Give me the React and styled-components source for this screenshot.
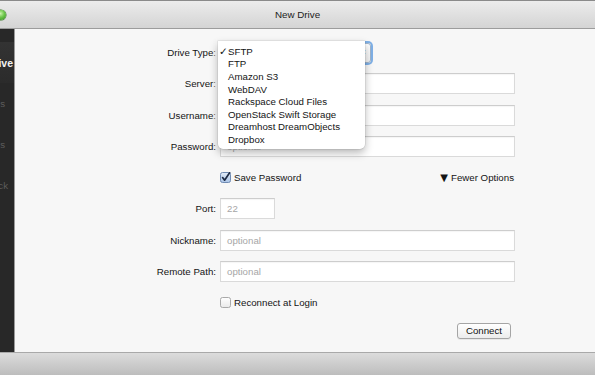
import React from 'react';
import styled, { createGlobalStyle } from 'styled-components';

const GlobalStyle = createGlobalStyle`
  html, body {
    margin: 0;
    padding: 0;
    background: #f6f6f6;
  }
  body {
    font-family: 'Liberation Sans', Arial, sans-serif;
  }
`;

const Window = styled.div`
  width: 595px;
  height: 375px;
  display: flex;
  flex-direction: column;
  overflow: hidden;
  font-size: 9.7px;
  color: #141414;
`;

const TitleBar = styled.div`
  height: 27px;
  flex: none;
  display: grid;
  grid-template-columns: 1fr auto 1fr;
  align-items: center;
  border-top: 1px solid #8a8a8a;
  border-bottom: 1px solid #9c9c9c;
  background: linear-gradient(#ececec, #d4d4d4);
`;

const Light = styled.span`
  width: 10px;
  height: 10px;
  margin-left: -4px;
  border-radius: 50%;
  background: radial-gradient(circle at 45% 35%, #c6f2a8 0, #6cc64a 45%, #2f8a1f 100%);
  box-shadow: 0 0 0 0.5px #3a7a2a;
`;

const Title = styled.div`
  font-size: 9.8px;
  color: #222;
`;

const Body = styled.div`
  flex: 1;
  display: flex;
  min-height: 0;
`;

const Sidebar = styled.div`
  width: 14px;
  flex: none;
  background: #282828;
  border-right: 1px solid #9a9a9a;
  display: flex;
  flex-direction: column;
  overflow: hidden;
`;

const SideItem = styled.div`
  height: 41px;
  display: flex;
  align-items: center;
  justify-content: flex-end;
  white-space: nowrap;
  padding-right: ${(p) => p.$pad}px;
  font-size: ${(p) => (p.$active ? 10.5 : 9.7)}px;
  font-weight: ${(p) => (p.$active ? 700 : 400)};
  color: ${(p) => (p.$active ? '#f2f2f2' : '#5c5c5c')};
  background: ${(p) => (p.$active ? 'linear-gradient(#333, #2b2b2b)' : 'transparent')};
  margin-top: ${(p) => p.$top || 0}px;
`;

const Main = styled.div`
  flex: 1;
  background: #f7f7f7;
  padding-top: 13px;
`;

const Form = styled.div`
  display: grid;
  grid-template-columns: 201px 295px;
  grid-auto-rows: 21px;
  column-gap: 4px;
  row-gap: 10.3px;
`;

const Label = styled.div`
  display: flex;
  align-items: center;
  justify-content: flex-end;
  white-space: nowrap;
`;

const Field = styled.div`
  position: relative;
  display: flex;
  align-items: center;
  justify-content: ${(p) => p.$justify || 'flex-start'};
  padding-right: ${(p) => p.$padRight || 0}px;
`;

const Input = styled.div`
  box-sizing: border-box;
  width: ${(p) => p.$width || 295}px;
  height: 21px;
  background: #fff;
  border: 1px solid #dadada;
  border-top-color: #cdcdcd;
  box-shadow: inset 0 1px 1px rgba(0, 0, 0, 0.04);
  display: flex;
  align-items: center;
  padding-left: 6px;
  color: #a6a6a6;
`;

const Select = styled.div`
  box-sizing: border-box;
  width: 151px;
  height: 20px;
  border-radius: 3px;
  border: 1px solid #9fb4cc;
  background: linear-gradient(#ffffff, #f1f1f1);
  box-shadow: 0 0 0 2px #7fb0e6;
  display: flex;
  align-items: center;
  justify-content: flex-end;
  padding-right: 3px;
`;

const Arrows = styled.span`
  font-size: 8px;
  line-height: 1;
  color: #444;
`;

const Menu = styled.div`
  position: absolute;
  left: -2px;
  top: -1px;
  width: 147px;
  box-sizing: border-box;
  padding: 4px 0 3px 2px;
  background: #fff;
  border-radius: 0 0 5px 5px;
  box-shadow: 0 4px 9px rgba(0, 0, 0, 0.28), 0 0 0 0.5px rgba(0, 0, 0, 0.12),
    -3px 0 3px rgba(247, 247, 247, 0.95);
  z-index: 2;
`;

const MenuItem = styled.div`
  display: flex;
  align-items: center;
  height: 12.6px;
  white-space: nowrap;
`;

const Check = styled.span`
  width: 8px;
  flex: none;
  font-size: 10.5px;
  font-family: 'DejaVu Sans', sans-serif;
  margin-left: -1px;
  margin-right: 1px;
`;

const CheckRow = styled.label`
  display: flex;
  align-items: center;
  gap: 3px;
`;

const Disclosure = styled.span`
  display: flex;
  align-items: center;
  gap: 3px;
`;

const Triangle = styled.span`
  font-size: 10px;
  font-family: 'DejaVu Sans', sans-serif;
  line-height: 1;
`;

const Button = styled.div`
  box-sizing: border-box;
  width: 54px;
  height: 16px;
  align-self: flex-start;
  margin-top: -1px;
  border: 1px solid #a5a5a5;
  border-radius: 3px;
  background: linear-gradient(#ffffff, #ececec);
  box-shadow: 0 1px 0 rgba(0, 0, 0, 0.06);
  display: flex;
  align-items: center;
  justify-content: center;
  color: #111;
`;

const BottomBar = styled.div`
  height: 22px;
  flex: none;
  border-top: 1px solid #a9a9a9;
  background: linear-gradient(#dcdcdc, #bdbdbd);
`;

const CheckBox = ({ checked }) => (
  <svg width="11" height="11" viewBox="0 0 11 11">
    <defs>
      <linearGradient id={checked ? 'cbOn' : 'cbOff'} x1="0" y1="0" x2="0" y2="1">
        <stop offset="0" stopColor={checked ? '#e2ecf8' : '#ffffff'} />
        <stop offset="1" stopColor={checked ? '#a9c3e6' : '#e9e9e9'} />
      </linearGradient>
    </defs>
    <rect
      x="0.5"
      y="0.5"
      width="10"
      height="10"
      rx="2"
      fill={`url(#${checked ? 'cbOn' : 'cbOff'})`}
      stroke={checked ? '#6f8bb3' : '#a9a9a9'}
    />
    {checked && (
      <path d="M2.6 5.6 L4.6 8.2 L9.6 0.8" fill="none" stroke="#1c2a44" strokeWidth="1.7" strokeLinecap="round" strokeLinejoin="round" />
    )}
  </svg>
);

const driveTypes = [
  'SFTP',
  'FTP',
  'Amazon S3',
  'WebDAV',
  'Rackspace Cloud Files',
  'OpenStack Swift Storage',
  'Dreamhost DreamObjects',
  'Dropbox',
];

export default function App() {
  return (
    <>
      <GlobalStyle />
      <Window>
        <TitleBar>
          <Light />
          <Title>New Drive</Title>
          <span />
        </TitleBar>
        <Body>
          <Sidebar>
            <SideItem $active $pad={1} $top={13}>New Drive</SideItem>
            <SideItem $pad={9}>Drives</SideItem>
            <SideItem $pad={9}>Settings</SideItem>
            <SideItem $pad={6}>Feedback</SideItem>
          </Sidebar>
          <Main>
            <Form>
              <Label>Drive Type:</Label>
              <Field>
                <Select>
                  <Arrows>⬍</Arrows>
                </Select>
                <Menu>
                  {driveTypes.map((t, i) => (
                    <MenuItem key={t}>
                      <Check>{i === 0 ? '✓' : ''}</Check>
                      {t}
                    </MenuItem>
                  ))}
                </Menu>
              </Field>

              <Label>Server:</Label>
              <Field>
                <Input />
              </Field>

              <Label>Username:</Label>
              <Field>
                <Input />
              </Field>

              <Label>Password:</Label>
              <Field>
                <Input>optional</Input>
              </Field>

              <span />
              <Field $justify="space-between" $padRight={1}>
                <CheckRow>
                  <CheckBox checked />
                  Save Password
                </CheckRow>
                <Disclosure>
                  <Triangle>▼</Triangle>
                  Fewer Options
                </Disclosure>
              </Field>

              <Label>Port:</Label>
              <Field>
                <Input $width={55}>22</Input>
              </Field>

              <Label>Nickname:</Label>
              <Field>
                <Input>optional</Input>
              </Field>

              <Label>Remote Path:</Label>
              <Field>
                <Input>optional</Input>
              </Field>

              <span />
              <Field>
                <CheckRow>
                  <CheckBox />
                  Reconnect at Login
                </CheckRow>
              </Field>

              <span />
              <Field $justify="flex-end" $padRight={4}>
                <Button>Connect</Button>
              </Field>
            </Form>
          </Main>
        </Body>
        <BottomBar />
      </Window>
    </>
  );
}
